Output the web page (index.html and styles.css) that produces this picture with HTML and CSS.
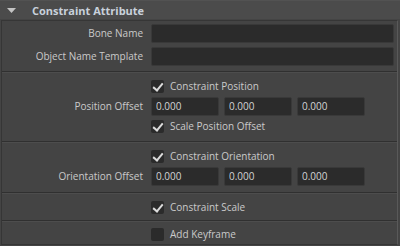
FILE: index.html
```html
<!DOCTYPE html>
<html lang="en">
<head>
    <meta charset="UTF-8">
    <meta name="viewport" content="width=device-width, initial-scale=1.0">
    <title>Constraint Attribute</title>
    <link rel="stylesheet" href="styles.css">
</head>
<body>
    <div class="header">
        <svg class="arrow" width="9" height="5" viewBox="0 0 9 5"><polygon points="0,0 9,0 4.5,5" fill="#c4c4c4"/></svg>
        <span class="title">Constraint Attribute</span>
    </div>

    <div class="panel">
        <div class="section first">
            <div class="row">
                <label class="label">Bone Name</label>
                <div class="field"><input type="text" class="text-input wide"></div>
            </div>
            <div class="row">
                <label class="label">Object Name Template</label>
                <div class="field"><input type="text" class="text-input wide"></div>
            </div>
        </div>

        <div class="section position">
            <div class="row">
                <span class="label"></span>
                <div class="field"><span class="check on"></span><span class="check-text">Constraint Position</span></div>
            </div>
            <div class="row">
                <label class="label">Position Offset</label>
                <div class="field">
                    <input type="text" class="text-input num" value="0.000">
                    <input type="text" class="text-input num" value="0.000">
                    <input type="text" class="text-input num" value="0.000">
                </div>
            </div>
            <div class="row">
                <span class="label"></span>
                <div class="field"><span class="check on"></span><span class="check-text">Scale Position Offset</span></div>
            </div>
        </div>

        <div class="section orientation">
            <div class="row">
                <span class="label"></span>
                <div class="field"><span class="check on"></span><span class="check-text">Constraint Orientation</span></div>
            </div>
            <div class="row">
                <label class="label">Orientation Offset</label>
                <div class="field">
                    <input type="text" class="text-input num" value="0.000">
                    <input type="text" class="text-input num" value="0.000">
                    <input type="text" class="text-input num" value="0.000">
                </div>
            </div>
        </div>

        <div class="section scale">
            <div class="row">
                <span class="label"></span>
                <div class="field"><span class="check on"></span><span class="check-text">Constraint Scale</span></div>
            </div>
        </div>

        <div class="section keyframe">
            <div class="row">
                <span class="label"></span>
                <div class="field"><span class="check"></span><span class="check-text">Add Keyframe</span></div>
            </div>
        </div>
    </div>
</body>
</html>
```

FILE: styles.css
```css
* {
    margin: 0;
    padding: 0;
    box-sizing: border-box;
    font-family: "Open Sans", Arial, sans-serif;
}

body {
    width: 400px;
    height: 246px;
    overflow: hidden;
    background-color: #444444;
    color: #cacaca;
    font-size: 10px;
}

.header {
    height: 19px;
    display: flex;
    align-items: center;
    padding-left: 7px;
    background-color: #4b4b4b;
    border-top: 1px solid #525252;
}

.arrow {
    display: block;
}

.title {
    margin-left: 16px;
    font-weight: bold;
    color: #c8d1db;
    font-size: 11px;
}

.panel {
    margin: 1px 2px 0 1px;
    border-top: 1px solid #363636;
    border-left: 1px solid #363636;
    border-right: 1px solid #595959;
    border-bottom: 1px solid #363636;
    background-color: #444444;
}

.section {
    padding: 4px 0 5px;
    border-top: 1px solid #303030;
    box-shadow: inset 0 1px 0 #4d4d4d;
}

.section.first {
    border-top: none;
    box-shadow: none;
    padding: 2px 0 5px;
    display: flex;
    flex-direction: column;
    gap: 3px;
}

.section.orientation {
    padding-bottom: 6px;
}

.section.scale {
    padding: 4px 0 3px;
}

.section.keyframe {
    padding: 3px 0 0;
}

.row {
    display: grid;
    grid-template-columns: 141px 1fr;
    column-gap: 8px;
    align-items: center;
    height: 20px;
}

.label {
    text-align: right;
    white-space: nowrap;
}

.field {
    display: flex;
    align-items: center;
    gap: 5px;
}

.text-input {
    height: 19px;
    padding: 0 4px;
    background-color: #2b2b2b;
    border: 1px solid #393939;
    border-radius: 2px;
    color: #d4d4d4;
    font-size: 10px;
    outline: none;
}

.text-input.wide {
    width: 243px;
}

.text-input.num {
    width: 68px;
}

.check {
    width: 13px;
    height: 13px;
    border-radius: 2px;
    background-color: #2b2b2b;
    flex-shrink: 0;
    position: relative;
}

.check.on::after {
    content: "";
    position: absolute;
    left: 4px;
    top: 1px;
    width: 4px;
    height: 8px;
    border-right: 2px solid #dcdcdc;
    border-bottom: 2px solid #dcdcdc;
    transform: rotate(40deg);
}

.check-text {
    margin-left: 1px;
    white-space: nowrap;
}
```
